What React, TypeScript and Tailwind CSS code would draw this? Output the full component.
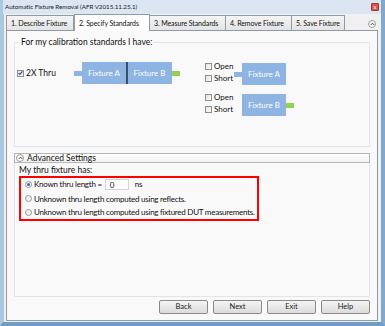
import React from "react";

const Check = ({ checked = false }: { checked?: boolean }) => (
  <span className="w-[7px] h-[7px] border border-[#8f8f8f] bg-gradient-to-br from-[#e4e4e4] to-[#fafafa] flex items-center justify-center shrink-0">
    {checked && (
      <svg width="6" height="6" viewBox="0 0 6 6">
        <path d="M0.8 3.2 L2.3 4.8 L5.2 1" stroke="#1f3f8f" strokeWidth="1.3" fill="none" />
      </svg>
    )}
  </span>
);

const Radio = ({ checked = false }: { checked?: boolean }) => (
  <span className="w-[7px] h-[7px] rounded-full border border-[#9a9a9a] bg-[#f0f0f0] flex items-center justify-center shrink-0">
    {checked && <span className="w-[3px] h-[3px] rounded-full bg-[#2a6fb0]" />}
  </span>
);

const Box = ({ label }: { label: string }) => (
  <div className="w-[44px] h-[22px] bg-[#8db4e2] text-white flex items-center justify-center text-[8px] whitespace-nowrap shrink-0">{label}</div>
);

const Btn = ({ label }: { label: string }) => (
  <div className="w-[49px] h-[14px] border border-[#8a8a8a] rounded-[2px] bg-gradient-to-b from-[#f4f4f4] to-[#dcdcdc] flex items-center justify-center text-[7.5px] text-[#222]">
    {label}
  </div>
);

const OpenShort = ({ w }: { w: string }) => (
  <div className={`flex flex-col gap-[4px] self-start mt-[-1px] ${w}`}>
    <div className="flex items-center h-[8px]"><Check /><span className="text-[8px] ml-[2px] leading-[8px]">Open</span></div>
    <div className="flex items-center h-[8px]"><Check /><span className="text-[8px] ml-[2px] leading-[8px]">Short</span></div>
  </div>
);

const tabBase = "h-[15px] px-[4px] flex items-center border border-b-0 border-[#8e9aa6] text-[7px] tracking-[-0.1px] whitespace-nowrap overflow-hidden shrink-0";
const tabOff = "bg-gradient-to-b from-[#f5f5f5] to-[#e4e4e4]";
const txt = "text-[8px] tracking-[-0.25px] whitespace-nowrap";

export default function App() {
  const font = "font-['Lato','Liberation_Sans',sans-serif]";
  return (
    <div className={`w-[385px] h-[326px] bg-[#dbe6f2] flex flex-col ${font} text-[#111] overflow-hidden border-l-[3px] border-r-[4px] border-b-[4px] border-l-[#a9c8e6] border-r-[#7fa9cf] border-b-[#6e9cc4]`}>
      {/* title bar */}
      <div className="h-[14px] flex items-center justify-between pl-[2px] pr-[2px] shrink-0">
        <span className="text-[6.3px] tracking-[-0.05px] text-[#222] whitespace-nowrap">Automatic Fixture Removal (AFR V2015.11.25.1)</span>
        <span className="w-[8px] h-[8px] bg-[#d9534a] border border-[#a33] rounded-[1px] flex items-center justify-center text-white text-[6px] leading-none">x</span>
      </div>
      {/* client */}
      <div className="flex-1 bg-[#f0f0f0] border-l border-[#b9c3ce] flex flex-col pl-[2px] pr-[2px]">
        {/* tabs row */}
        <div className="h-[16px] flex items-end">
          <div className="flex items-end">
            <div className={`${tabBase} ${tabOff} w-[68px]`}>1. Describe Fixture</div>
            <div className={`${tabBase} h-[17px] bg-white w-[76px] mb-[-1px] relative z-10`}>2. Specify Standards</div>
            <div className={`${tabBase} ${tabOff} border-l-0 w-[76px]`}>3. Measure Standards</div>
            <div className={`${tabBase} ${tabOff} border-l-0 w-[66px]`}>4. Remove Fixture</div>
            <div className={`${tabBase} ${tabOff} border-l-0 w-[53px]`}>5. Save Fixture</div>
          </div>
          <div className="flex-1" />
          <div className="w-[8px] h-[8px] rounded-full border border-[#9a9a9a] bg-white flex items-center justify-center mb-[2px] mr-[3px]">
            <svg width="5" height="4" viewBox="0 0 5 4"><path d="M0.7 3 L2.5 1.2 L4.3 3" stroke="#333" strokeWidth="0.9" fill="none" /></svg>
          </div>
        </div>
        {/* panel */}
        <div className="flex-1 border border-[#8e9aa6] bg-[#f9f9f9] mr-[1px] mb-[1px] flex flex-col px-[7px] pt-[6px]">
          <fieldset className="border border-[#dde5ee] h-[110px] pl-[2px] pr-[2px]">
            <legend className="text-[8.5px] ml-[3px] px-[1px] leading-[10px] whitespace-nowrap">For my calibration standards I have:</legend>
            <div className="flex mt-[15px]">
              <div className="flex items-center h-[22px] w-[188px]">
                <Check checked />
                <span className="text-[8.5px] ml-[2px] w-[48px] whitespace-nowrap">2X Thru</span>
                <div className="w-[8px] h-[5px] bg-[#8db4e2]" />
                <Box label="Fixture A" />
                <div className="w-[1.5px] h-[22px] bg-[#3c4f66]" />
                <Box label="Fixture B" />
                <div className="w-[8px] h-[5px] bg-[#92d050]" />
              </div>
              <div className="flex flex-col gap-[9px] mt-[1px]">
                <div className="flex items-center h-[22px]">
                  <OpenShort w="w-[29px]" />
                  <div className="w-[8px] h-[5px] bg-[#8db4e2]" />
                  <Box label="Fixture A" />
                </div>
                <div className="flex items-center h-[22px]">
                  <OpenShort w="w-[37px]" />
                  <Box label="Fixture B" />
                  <div className="w-[8px] h-[5px] bg-[#92d050]" />
                </div>
              </div>
            </div>
          </fieldset>
          {/* advanced header */}
          <div className="mt-[6px] h-[10px] border border-[#b5b5b5] bg-gradient-to-b from-white to-[#f2f2f2] flex items-center pl-[1px]">
            <div className="w-[8px] h-[8px] rounded-full border border-[#9a9a9a] bg-white flex items-center justify-center">
              <svg width="5" height="4" viewBox="0 0 5 4"><path d="M0.7 3 L2.5 1.2 L4.3 3" stroke="#333" strokeWidth="0.9" fill="none" /></svg>
            </div>
            <span className="text-[8.5px] ml-[3px] leading-[9px] whitespace-nowrap">Advanced Settings</span>
          </div>
          <div className="h-[134px] border border-t-0 border-[#dde5ee] pl-[4px] pt-[2px]">
            <div className="text-[8.5px] leading-[10px] whitespace-nowrap">My thru fixture has:</div>
            <div className="w-[240px] h-[45px] border-2 border-[#ff0000] mt-[1px] pl-[4px] flex flex-col">
              <div className="flex items-center h-[15px] mt-[-1px]">
                <Radio checked />
                <span className={`${txt} ml-[2px]`}>Known thru length =</span>
                <div className="w-[24px] h-[11px] border border-[#d4d4d4] bg-white ml-[3px] text-[8px] pl-[4px] leading-[10px]">0</div>
                <span className={`${txt} ml-[6px]`}>ns</span>
              </div>
              <div className="flex items-center h-[14px] mt-[1px]">
                <Radio />
                <span className={`${txt} ml-[2px]`}>Unknown thru length computed using reflects.</span>
              </div>
              <div className="flex items-center h-[14px]">
                <Radio />
                <span className={`${txt} ml-[2px]`}>Unknown thru length computed using fixtured DUT measurements.</span>
              </div>
            </div>
          </div>
          <div className="flex justify-end gap-[5px] mt-[3px]">
            <Btn label="Back" />
            <Btn label="Next" />
            <Btn label="Exit" />
            <Btn label="Help" />
          </div>
        </div>
      </div>
    </div>
  );
}
